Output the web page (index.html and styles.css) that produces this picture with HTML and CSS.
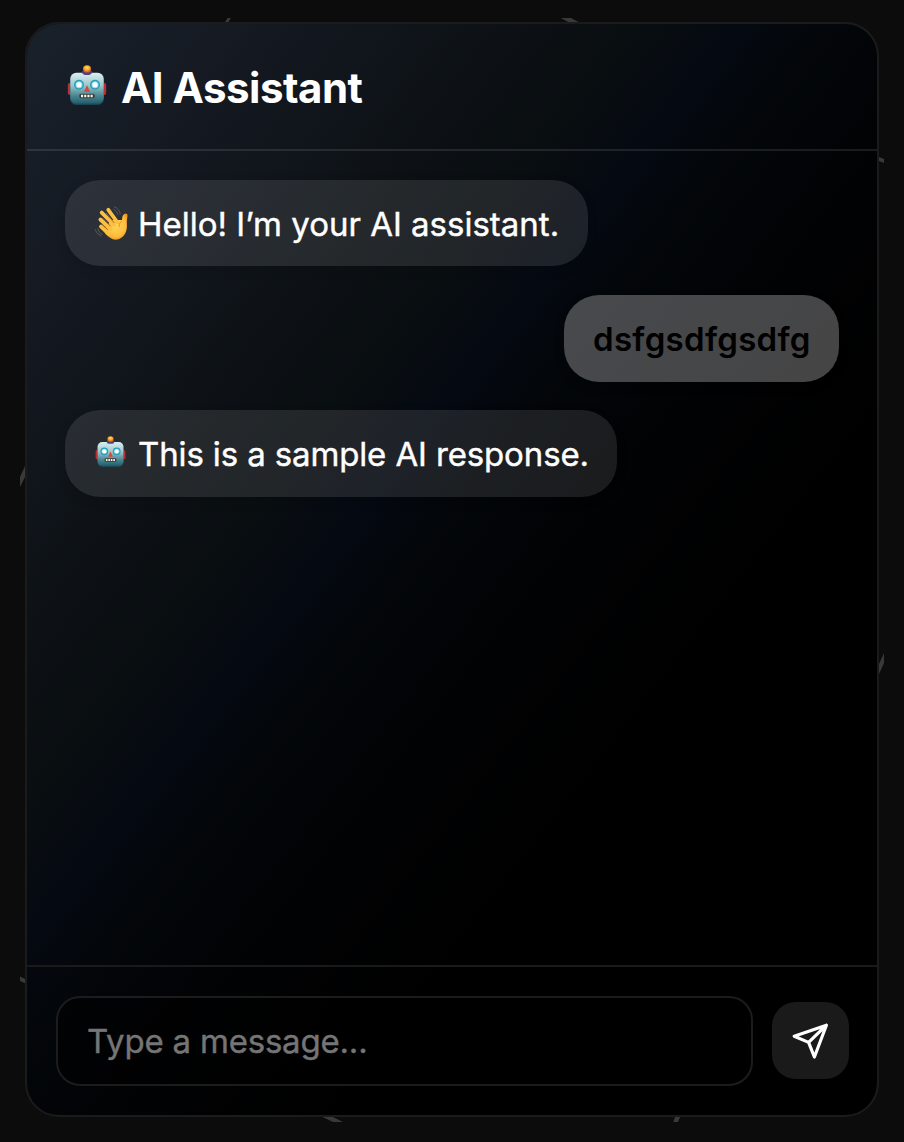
FILE: index.html
```
<!DOCTYPE html>
<html lang="en">
<head>
<meta charset="utf-8">
<title>AI Assistant</title>
<link rel="stylesheet" href="styles.css">
</head>
<body>
<svg class="orbit" viewBox="0 0 904 1142" aria-hidden="true">
  <path d="M225 22 227.7 18H230.7L228.7 22ZM560.7 18H571L579.5 22.5H569ZM879 157 884 159V163L879 161ZM879 664 884 653V663L879 674ZM25 466 20 477V487L25 477ZM20 976.5 25 979V983.2L20 981ZM322.5 1117H333L343 1122H333ZM675 1117H680L678 1122H673.3Z"/>
</svg>
<svg class="symbols" aria-hidden="true">
  <defs>
    <linearGradient id="metal" x1="0" y1="0" x2="0" y2="1">
      <stop offset="0" stop-color="#d9f0f1"/><stop offset=".4" stop-color="#a0c8cc"/><stop offset=".75" stop-color="#4b8792"/><stop offset="1" stop-color="#235e6c"/>
    </linearGradient>
    <radialGradient id="bulb" cx=".5" cy=".35" r=".6">
      <stop offset="0" stop-color="#ffe36b"/><stop offset=".6" stop-color="#f6a020"/><stop offset="1" stop-color="#d9541e"/>
    </radialGradient>
    <radialGradient id="skin" cx=".5" cy=".45" r=".6">
      <stop offset="0" stop-color="#ffd65c"/><stop offset=".7" stop-color="#fdbd3c"/><stop offset="1" stop-color="#ec9420"/>
    </radialGradient>
    <symbol id="robot" viewBox="0 0 40 40">
      <rect x="0.8" y="18" width="5" height="12" rx="2" fill="#b92f36"/>
      <rect x="34.2" y="18" width="5" height="12" rx="2" fill="#b92f36"/>
      <rect x="3" y="8.3" width="34" height="31.5" rx="6.5" fill="#205260"/>
      <rect x="3.3" y="7.8" width="33.4" height="30.5" rx="6" fill="url(#metal)"/>
      <ellipse cx="20" cy="7.3" rx="4.9" ry="2.8" fill="#554080"/>
      <ellipse cx="20" cy="3.9" rx="4" ry="3.7" fill="url(#bulb)"/>
      <circle cx="12" cy="19.8" r="5" fill="#289dbb"/><circle cx="28" cy="19.8" r="5" fill="#289dbb"/>
      <circle cx="12" cy="19.8" r="3.5" fill="#91e0f2"/><circle cx="28" cy="19.8" r="3.5" fill="#91e0f2"/>
      <circle cx="12" cy="19.8" r="2.5" fill="#fff"/><circle cx="28" cy="19.8" r="2.5" fill="#fff"/>
      <path d="M20 20 23 26.7H17Z" fill="#d9463d"/>
      <rect x="12.3" y="28.8" width="15.4" height="4.4" rx="1.7" fill="#343f42"/>
      <path d="M14 31H26.5" stroke="#fff5df" stroke-width="2.4" stroke-dasharray="2.1 1.1"/>
    </symbol>
    <symbol id="wave" viewBox="0 0 35 35">
      <g fill="none" stroke="#545a61" stroke-width="1" stroke-linecap="round">
        <path d="M19.8 3.2Q23 5 24 8.5M20.5.8Q25.4 3 26.3 7.8M3.7 22.5Q4.5 26.8 8.2 28.5M1 23.5Q2.7 28.5 7 30"/>
      </g>
      <path d="M10 25 17 14 28 14Q28 7.7 32 7.5 34.2 7.8 33.2 12 32.6 15 32.9 19C33.3 25 30.5 31.5 24.5 33.2 19.5 34.7 15.7 32.3 11.5 28Z" fill="url(#skin)"/>
      <g fill="none" stroke="#fcbf40" stroke-width="3.8" stroke-linecap="round">
        <path d="M23.5 16.5 14.3 3.8M20 19 7.7 6.6M16.5 23 6.4 13.5M15 28 7 20.5"/>
      </g>
      <path d="M12.5 7.5 20 16.7M9 12.5 16.4 20M8.5 18.7 13.6 23.6" stroke="#a76a20" stroke-width="1" stroke-linecap="round"/>
      <path d="M27.8 15Q24.3 17.5 25.2 21" fill="none" stroke="#e59a28" stroke-width="1"/>
    </symbol>
  </defs>
</svg>
<main class="card">
  <header class="header">
    <svg class="header-icon"><use href="#robot"/></svg>
    <h1 class="title">AI Assistant</h1>
  </header>
  <section class="messages">
    <div class="bubble bubble-ai bubble-hello"><svg class="emoji emoji-wave"><use href="#wave"/></svg><span class="hello">Hello! I’m your AI assistant.</span></div>
    <div class="bubble bubble-user"><span class="sent">dsfgsdfgsdfg</span></div>
    <div class="bubble bubble-ai bubble-reply"><svg class="emoji emoji-robot"><use href="#robot"/></svg><span class="reply">This is a sample AI response.</span></div>
  </section>
  <footer class="composer">
    <input class="field" type="text" placeholder="Type a message...">
    <button class="send" aria-label="Send">
      <svg class="send-icon" viewBox="0 0 38 38"><path d="M34.4 3.2 2.2 14.3 16.6 20.4 22.4 35Z M16.6 20.4 34.4 3.2"/></svg>
    </button>
  </footer>
</main>
</body>
</html>
```
FILE: styles.css
```
* { box-sizing: border-box; }
body {
  margin: 0;
  height: 1142px;
  padding: 22px 25px 25px;
  overflow: hidden;
  background: #0c0c0c;
  color: #fff;
  font-family: Inter, "Liberation Sans", sans-serif;
}
.orbit { position: absolute; left: 0; top: 0; width: 904px; height: 1142px; fill: #393939; }
.symbols { position: absolute; width: 0; height: 0; }
.card {
  position: relative;
  display: flex;
  flex-direction: column;
  width: 854px;
  height: 1095px;
  border: 2px solid #1b1b1b;
  border-radius: 34px;
  overflow: hidden;
  background: linear-gradient(to bottom right, #19212a 0%, #151a23 12%, #10151b 22%, #0c1014 30%, #090e11 36%, #050911 42%, #03060a 47%, #020305 54%, #000 68%) padding-box, #0c0c0c;
}
.header {
  display: flex;
  align-items: center;
  gap: 14px;
  height: 127px;
  padding: 2px 40px 0;
  border-bottom: 2px solid rgba(255, 255, 255, .1);
}
.header-icon { width: 40px; height: 40px; margin-bottom: 5px; }
.title { margin: 0; font-size: 42px; line-height: 52px; font-weight: 680; letter-spacing: -.5px; white-space: nowrap; }
.messages {
  flex: 1;
  display: flex;
  flex-direction: column;
  align-items: flex-start;
  gap: 28.5px;
  padding: 29px 38px;
}
.bubble {
  display: flex;
  align-items: center;
  height: 86.6px;
  padding: 0 29px;
  border-radius: 35px;
  font-size: 33px;
  line-height: 48px;
  font-weight: 400;
  white-space: nowrap;
  box-shadow: 0 4px 12px rgba(0, 0, 0, .12);
}
.bubble-ai { background: rgba(255, 255, 255, .1); }
.bubble-hello { width: 523px; height: 86px; }
.bubble-user { align-self: flex-end; width: 275px; height: 87px; background: rgba(255, 255, 255, .27); color: #000; font-weight: 600; }
.bubble-reply { width: 552px; }
.hello, .reply, .field { -webkit-text-stroke-width: .4px; }
.hello { padding-top: 2px; letter-spacing: 0; }
.sent { padding-top: 1px; letter-spacing: .3px; }
.reply { padding-top: 1px; letter-spacing: -.13px; }
.emoji { flex: none; }
.emoji-wave { width: 35px; height: 35px; margin-right: 9px; }
.emoji-robot { width: 31px; height: 31px; margin: 0 12px 3px 1px; }
.composer {
  display: flex;
  align-items: center;
  gap: 19px;
  height: 150px;
  padding: 0 28px 0 29px;
  border-top: 2px solid #1a1a1a;
}
.field {
  width: 697px;
  height: 90px;
  padding: 0 29px;
  border: 2px solid #1c1c1c;
  border-radius: 24px;
  background: rgba(0, 0, 0, .5);
  color: #fff;
  font: 400 33px Inter, "Liberation Sans", sans-serif;
  letter-spacing: -.2px;
}
.field::placeholder { color: #757575; opacity: 1; }
.send {
  display: flex;
  align-items: center;
  justify-content: center;
  width: 77px;
  height: 77px;
  margin-bottom: 1px;
  padding: 0;
  border: 0;
  border-radius: 24px;
  background: #1a1a1a;
}
.send-icon { width: 38px; height: 38px; fill: none; stroke: #fff; stroke-width: 3.2; stroke-linejoin: round; stroke-linecap: round; }
```
